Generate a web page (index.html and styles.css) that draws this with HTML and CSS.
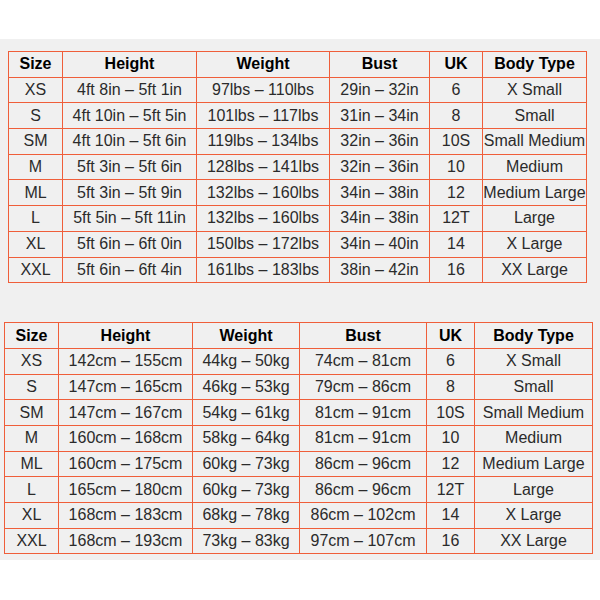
FILE: index.html
```html
<!DOCTYPE html>
<html>
<head>
<meta charset="utf-8">
<link rel="stylesheet" href="styles.css">
</head>
<body>
<div class="panel">
  <table class="chart chart-imperial">
    <colgroup><col class="c1"><col class="c2"><col class="c3"><col class="c4"><col class="c5"><col class="c6"></colgroup>
    <thead><tr><th>Size</th><th>Height</th><th>Weight</th><th>Bust</th><th>UK</th><th>Body Type</th></tr></thead>
    <tbody>
      <tr><td>XS</td><td>4ft 8in – 5ft 1in</td><td>97lbs – 110lbs</td><td>29in – 32in</td><td>6</td><td>X Small</td></tr>
      <tr><td>S</td><td>4ft 10in – 5ft 5in</td><td>101lbs – 117lbs</td><td>31in – 34in</td><td>8</td><td>Small</td></tr>
      <tr><td>SM</td><td>4ft 10in – 5ft 6in</td><td>119lbs – 134lbs</td><td>32in – 36in</td><td>10S</td><td>Small Medium</td></tr>
      <tr><td>M</td><td>5ft 3in – 5ft 6in</td><td>128lbs – 141lbs</td><td>32in – 36in</td><td>10</td><td>Medium</td></tr>
      <tr><td>ML</td><td>5ft 3in – 5ft 9in</td><td>132lbs – 160lbs</td><td>34in – 38in</td><td>12</td><td>Medium Large</td></tr>
      <tr><td>L</td><td>5ft 5in – 5ft 11in</td><td>132lbs – 160lbs</td><td>34in – 38in</td><td>12T</td><td>Large</td></tr>
      <tr><td>XL</td><td>5ft 6in – 6ft 0in</td><td>150lbs – 172lbs</td><td>34in – 40in</td><td>14</td><td>X Large</td></tr>
      <tr><td>XXL</td><td>5ft 6in – 6ft 4in</td><td>161lbs – 183lbs</td><td>38in – 42in</td><td>16</td><td>XX Large</td></tr>
    </tbody>
  </table>
  <table class="chart chart-metric">
    <colgroup><col class="c1"><col class="c2"><col class="c3"><col class="c4"><col class="c5"><col class="c6"></colgroup>
    <thead><tr><th>Size</th><th>Height</th><th>Weight</th><th>Bust</th><th>UK</th><th>Body Type</th></tr></thead>
    <tbody>
      <tr><td>XS</td><td>142cm – 155cm</td><td>44kg – 50kg</td><td>74cm – 81cm</td><td>6</td><td>X Small</td></tr>
      <tr><td>S</td><td>147cm – 165cm</td><td>46kg – 53kg</td><td>79cm – 86cm</td><td>8</td><td>Small</td></tr>
      <tr><td>SM</td><td>147cm – 167cm</td><td>54kg – 61kg</td><td>81cm – 91cm</td><td>10S</td><td>Small Medium</td></tr>
      <tr><td>M</td><td>160cm – 168cm</td><td>58kg – 64kg</td><td>81cm – 91cm</td><td>10</td><td>Medium</td></tr>
      <tr><td>ML</td><td>160cm – 175cm</td><td>60kg – 73kg</td><td>86cm – 96cm</td><td>12</td><td>Medium Large</td></tr>
      <tr><td>L</td><td>165cm – 180cm</td><td>60kg – 73kg</td><td>86cm – 96cm</td><td>12T</td><td>Large</td></tr>
      <tr><td>XL</td><td>168cm – 183cm</td><td>68kg – 78kg</td><td>86cm – 102cm</td><td>14</td><td>X Large</td></tr>
      <tr><td>XXL</td><td>168cm – 193cm</td><td>73kg – 83kg</td><td>97cm – 107cm</td><td>16</td><td>XX Large</td></tr>
    </tbody>
  </table>
</div>
</body>
</html>
```

FILE: styles.css
```css
html, body {
  margin: 0;
  padding: 0;
  background: #ffffff;
}
body {
  padding-top: 39px;
  font-family: "Liberation Sans", Arial, sans-serif;
}
.panel {
  background: #f0f0f0;
  height: 521px;
  box-sizing: border-box;
  padding-top: 12px;
  display: flex;
  flex-direction: column;
}
.chart {
  border-collapse: collapse;
  table-layout: fixed;
  font-size: 16px;
  color: #2b2b2b;
}
.chart th, .chart td {
  border: 1px solid #ef5e3a;
  box-shadow: inset 0 0 0 0 transparent;
  padding: 0;
  text-align: center;
  white-space: nowrap;
  overflow: visible;
}
.chart th {
  color: #000;
  font-weight: bold;
}
.chart tr {
  height: 25.7px;
}
.chart-imperial {
  margin-left: 8px;
  width: 578px;
}
.chart-imperial .c1 { width: 54px; }
.chart-imperial .c2 { width: 134px; }
.chart-imperial .c3 { width: 133px; }
.chart-imperial .c4 { width: 100px; }
.chart-imperial .c5 { width: 53px; }
.chart-imperial .c6 { width: 104px; }
.chart-metric {
  margin-top: 39px;
  margin-left: 4px;
  width: 588px;
}
.chart-metric .c1 { width: 54px; }
.chart-metric .c2 { width: 134px; }
.chart-metric .c3 { width: 107px; }
.chart-metric .c4 { width: 127px; }
.chart-metric .c5 { width: 48px; }
.chart-metric .c6 { width: 118px; }
```
